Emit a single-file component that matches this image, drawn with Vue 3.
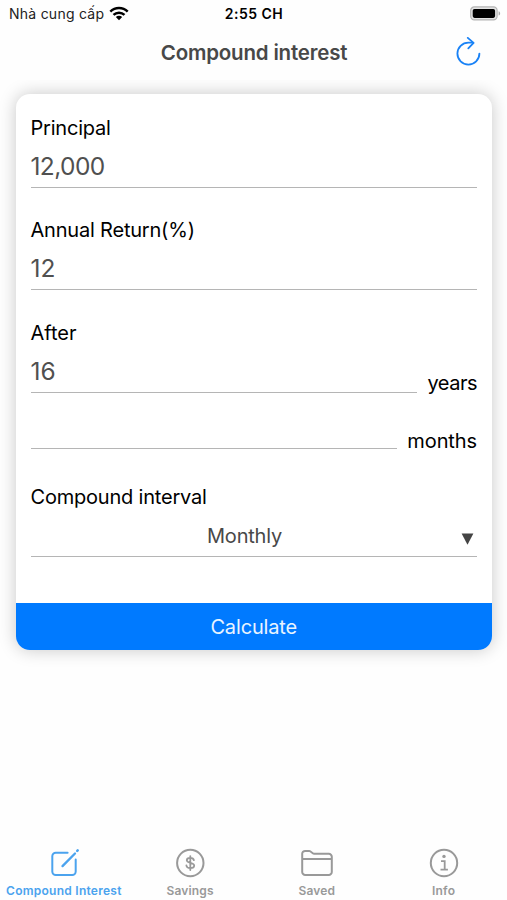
<script setup>
import { ref } from 'vue'

const principal = ref('12,000')
const annualReturn = ref('12')
const years = ref('16')
const months = ref('')
const interval = ref('Monthly')
</script>

<template>
  <div class="screen">
    <header class="status">
      <div class="carrier">
        <span class="carrier-name">Nhà cung cấp</span>
        <svg class="wifi" width="20" height="15" viewBox="0 0 20 15">
          <g fill="none" stroke="#000" stroke-width="2.5">
            <path d="M1.3 5.6C6.2.9 13.8.9 18.7 5.6" />
            <path d="M4.5 8.9c3.1-3 7.9-3 11 0" />
          </g>
          <path d="M10 14.2l-3.2-3.1c1.8-1.7 4.6-1.7 6.4 0z" fill="#000" />
        </svg>
      </div>
      <span class="time">2:55 CH</span>
      <svg class="battery" width="31" height="15" viewBox="0 0 31 15">
        <rect x=".7" y=".9" width="26.4" height="13" rx="3.6" fill="#e4e4e4" stroke="#b4b4b4" stroke-width="1.2" />
        <rect x="2.7" y="2.9" width="22.4" height="9" rx="1.8" fill="#000" />
        <path d="M28.6 5.2c2 .7 2 3.7 0 4.4z" fill="#aaa" />
      </svg>
    </header>

    <nav class="titlebar">
      <h1 class="title">Compound interest</h1>
      <button class="refresh" aria-label="Reset">
        <svg width="26" height="31" viewBox="0 0 26 31" fill="none" stroke="#1982f6" stroke-width="1.8" stroke-linecap="round" stroke-linejoin="round">
          <path d="M23.4 16.6A11 11 0 1 1 12.4 5.6h4.5" />
          <path d="M11.8 .9l5.8 5-5.3 5.4" />
        </svg>
      </button>
    </nav>

    <main class="content">
      <form class="card" @submit.prevent>
        <div class="fields">
          <div class="field">
            <span class="label">Principal</span>
            <div class="line"><span class="value thousands">{{ principal }}</span></div>
          </div>
          <div class="field">
            <span class="label">Annual Return(%)</span>
            <div class="line"><span class="value">{{ annualReturn }}</span></div>
          </div>
          <div class="field">
            <span class="label after">After</span>
            <div class="row">
              <div class="line"><span class="value">{{ years }}</span></div>
              <span class="unit years">years</span>
            </div>
            <div class="row months-row">
              <div class="line"><span class="value">{{ months }}</span></div>
              <span class="unit months">months</span>
            </div>
          </div>
          <div class="field interval">
            <span class="label">Compound interval</span>
            <div class="line select">
              <span class="choice">{{ interval }}</span>
              <svg class="arrow" width="13" height="12" viewBox="0 0 13 12"><path d="M.6.4h11.8L6.5 11.8z" fill="#444" /></svg>
            </div>
          </div>
        </div>
        <button class="calculate"><span>Calculate</span></button>
      </form>
    </main>

    <footer class="tabs">
      <div class="tab active">
        <svg width="32" height="32" viewBox="0 0 32 32" fill="none" stroke="currentColor" stroke-width="2" stroke-linecap="round">
          <path d="M19.6 5.7H7.8a3.5 3.5 0 0 0-3.5 3.5v15.4a3.5 3.5 0 0 0 3.5 3.5h16.4a3.5 3.5 0 0 0 3.5-3.5V12.6" />
          <path d="M14.5 19.1L27 6.5" stroke-width="2.3" />
          <path d="M29.2 3.9l.5-.5" stroke-width="2.5" />
        </svg>
        <span>Compound Interest</span>
      </div>
      <div class="tab">
        <svg width="32" height="32" viewBox="0 0 32 32" fill="none" stroke="currentColor" stroke-width="2" stroke-linecap="round">
          <circle cx="16.3" cy="16" r="13.2" />
          <path d="M19.9 13.2c-.3-1.5-1.6-2.3-3.6-2.3-2.1 0-3.5.9-3.5 2.4 0 3.4 7.4 1.8 7.4 5.3 0 1.7-1.5 2.6-3.9 2.6-2.2 0-3.7-1-3.9-2.7M16.3 9.1v14" stroke-width="1.8" />
        </svg>
        <span class="short">Savings</span>
      </div>
      <div class="tab">
        <svg width="34" height="32" viewBox="0 0 34 32" fill="none" stroke="currentColor" stroke-width="2" stroke-linejoin="round">
          <path d="M2.2 12V6.8a2.9 2.9 0 0 1 2.9-2.9h4.2c1.9 0 2.8 2.9 4.7 2.9h14.8a3 3 0 0 1 3 3V24.9a3 3 0 0 1-3 3H5.2a3 3 0 0 1-3-3zM2.4 12h29.4" />
        </svg>
        <span class="short">Saved</span>
      </div>
      <div class="tab">
        <svg width="32" height="32" viewBox="0 0 32 32" fill="none" stroke="currentColor" stroke-width="2">
          <circle cx="16" cy="16" r="13.2" />
          <circle cx="16" cy="9.4" r="1.7" fill="currentColor" stroke="none" />
          <path d="M13 14.2h3.7v8.3M12.5 22.6h7.4" stroke-width="1.8" />
        </svg>
        <span>Info</span>
      </div>
    </footer>
  </div>
</template>

<style>
body {
  background: #fff;
}
</style>

<style scoped>
.screen {
  display: flex;
  flex-direction: column;
  width: 507px;
  height: 900px;
  overflow: hidden;
  background: #fefefe;
  font-family: Inter, "Liberation Sans", sans-serif;
  color: #000;
  white-space: nowrap;
}

button {
  border: 0;
  padding: 0;
  background: none;
  font: inherit;
}

.status {
  display: grid;
  grid-template-columns: 1fr auto 1fr;
  align-items: center;
  height: 27px;
  padding: 0 6px 0 9px;
  box-sizing: border-box;
  font-size: 14px;
}

.carrier {
  display: flex;
  align-items: center;
  gap: 5px;
}

.carrier-name {
  color: #222;
  letter-spacing: 0.25px;
}

.time {
  margin-right: 2px;
  font-weight: 600;
  letter-spacing: 0.5px;
}

.battery {
  justify-self: end;
}

.titlebar {
  display: grid;
  grid-template-columns: 1fr auto 1fr;
  align-items: center;
  height: 53px;
  padding: 0 25px 3px 26px;
  box-sizing: border-box;
}

.title {
  grid-column: 2;
  margin: 0;
  font-size: 20.5px;
  font-weight: 600;
  letter-spacing: -0.19px;
  color: #484848;
}

.refresh {
  justify-self: end;
  height: 31px;
}

.content {
  flex: 1;
  overflow: hidden;
  padding: 13.5px 15px 13.5px 15.5px;
}

.card {
  height: 556.5px;
  display: flex;
  flex-direction: column;
  border-radius: 14px;
  background: #fff;
  box-shadow: 0 0 17px rgba(0, 0, 0, 0.22);
}

.fields {
  flex: 1;
  display: flex;
  flex-direction: column;
  gap: 30.7px;
  padding: 22px 15px 0;
}

.field {
  display: flex;
  flex-direction: column;
}

.label {
  height: 24px;
  line-height: 24px;
  font-size: 20px;
  letter-spacing: -0.2px;
}

.after {
  letter-spacing: 0;
}

.line {
  flex: 1;
  display: flex;
  align-items: center;
  height: 48px;
  padding-top: 5px;
  box-sizing: border-box;
  border-bottom: 1.5px solid #b5b5b5;
}

.field > .line {
  flex: none;
}

.value {
  font-size: 24.5px;
  line-height: 30px;
  color: #505050;
}

.thousands {
  letter-spacing: -0.6px;
}

.row {
  display: flex;
  align-items: flex-end;
  gap: 10px;
}

.unit {
  font-size: 20px;
  line-height: 24px;
}

.years {
  margin-bottom: -2px;
  letter-spacing: -0.5px;
}

.months {
  margin-bottom: -4px;
  letter-spacing: -0.1px;
}

.months-row {
  margin-top: 8px;
}

.interval {
  margin-top: 5px;
}

.select {
  justify-content: center;
  position: relative;
  padding-top: 7px;
}

.choice {
  margin-right: 18.5px;
  font-size: 20px;
  letter-spacing: -0.2px;
  color: #484848;
}

.arrow {
  position: absolute;
  right: 3px;
  top: 24px;
}

.calculate {
  height: 47px;
  border-radius: 0 0 14px 14px;
  background: #007aff;
  color: #e9f4ff;
  font-size: 20px;
  letter-spacing: -0.15px;
}

.tabs {
  display: grid;
  grid-template-columns: repeat(4, 1fr);
  height: 53px;
}

.tab {
  display: flex;
  flex-direction: column;
  align-items: center;
  color: #999;
  font-size: 12px;
  font-weight: 600;
  line-height: 16px;
  letter-spacing: 0.25px;
}

.tab svg {
  margin-bottom: 4px;
}

.short {
  letter-spacing: 0.15px;
}

.active {
  padding-left: 1px;
  color: #4ba3ee;
}
</style>
